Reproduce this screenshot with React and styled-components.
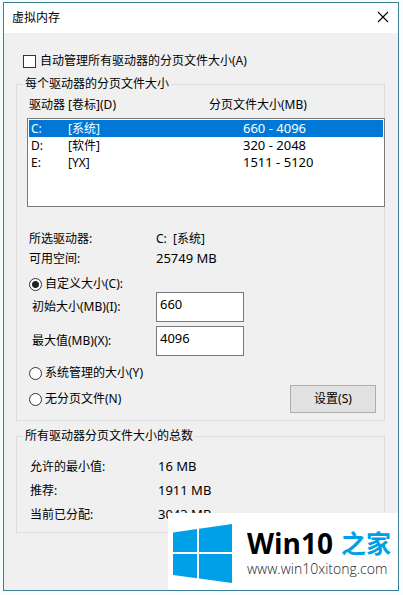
import React, { useState } from "react"
import styled, { createGlobalStyle } from "styled-components"

const colors = {
  frame: "#3f7f93",
  face: "#f0f0f0",
  groupLine: "#dcdcdc",
  field: "#7a7a7a",
  select: "#0078d7",
  brand: "#00a0e9",
}

const drives = [
  { letter: "C:", label: "[系统]", size: "660 - 4096" },
  { letter: "D:", label: "[软件]", size: "320 - 2048" },
  { letter: "E:", label: "[YX]", size: "1511 - 5120" },
]

const totals = [
  { name: "允许的最小值:", value: "16 MB" },
  { name: "推荐:", value: "1911 MB" },
  { name: "当前已分配:", value: "3043 MB" },
]

const GlobalStyle = createGlobalStyle`
  * {
    box-sizing: border-box;
  }
  body {
    margin: 0;
    background: #f6fdfe;
    color: #000;
    font: 12px/16px "Noto Sans", "Noto Sans CJK SC", sans-serif;
  }
  button,
  input {
    font: inherit;
    color: inherit;
  }
`

const Page = styled.div`
  display: flex;
  min-height: 100vh;
  padding: 2px 4px 4px 3px;
`

const Window = styled.main`
  position: relative;
  flex: 1;
  min-width: 0;
  border: 1px solid ${colors.frame};
  background: ${colors.face};
`

const TitleBar = styled.header`
  display: flex;
  align-items: center;
  justify-content: space-between;
  height: 30px;
  padding-left: 8px;
  background: #fff;
`

const Title = styled.h1`
  margin: 0;
  font-size: 12px;
  font-weight: 400;
`

const CloseButton = styled.button`
  display: flex;
  align-items: center;
  justify-content: center;
  width: 30px;
  height: 30px;
  padding: 0 0 2px;
  border: 0;
  background: none;
`

const Body = styled.div`
  padding: 20px 13px 12px 12px;
`

const Option = styled.label`
  display: flex;
  align-items: center;
  gap: ${({ $gap }) => $gap || 3}px;
  height: 16px;
`

const CheckOption = styled(Option)`
  margin: 0 0 7px 7px;
`

const Checkbox = styled.input`
  appearance: none;
  width: 13px;
  height: 13px;
  margin: 0;
  border: 1px solid #333;
  background: #fff;
  &:checked {
    background: ${colors.select};
  }
`

const Radio = styled.input`
  appearance: none;
  width: 13px;
  height: 13px;
  margin: 0;
  border: 1px solid #333;
  border-radius: 50%;
  background: #fff;
  &:checked {
    background: radial-gradient(circle, #222 3px, #fff 4px);
  }
`

const Group = styled.fieldset`
  min-width: 0;
  margin: 0 0 7px;
  padding: 0 0 ${({ $bottom }) => $bottom}px 10px;
  border: 1px solid ${colors.groupLine};
`

const Legend = styled.legend`
  margin-left: -4px;
  padding: 0 2px;
`

const Columns = styled.div`
  display: grid;
  grid-template-columns: 180px 1fr;
  padding: 5px 2px;
`

const DriveTable = styled.table`
  width: 100%;
  border-collapse: collapse;
  table-layout: fixed;
`

const DriveBox = styled.div`
  height: 89px;
  margin-right: -1px;
  padding: 1px;
  border: 1px solid ${colors.field};
  background: #fff;
`

const DriveRow = styled.tr`
  height: 17px;
  background: ${({ $selected }) => ($selected ? colors.select : "#fff")};
  color: ${({ $selected }) => ($selected ? "#fff" : "#000")};
  cursor: default;
`

const DriveCell = styled.td`
  width: ${({ $width }) => $width};
  padding: 0 0 0 2px;
  font-size: ${({ $numeric }) => ($numeric ? 13 : 12)}px;
  vertical-align: baseline;
`

const Facts = styled.dl`
  display: grid;
  grid-template-columns: ${({ $label }) => $label}px 1fr;
  grid-auto-rows: ${({ $row }) => $row}px;
  align-items: baseline;
  margin: ${({ $top }) => $top}px 0 ${({ $bottom }) => $bottom || 0}px;
  padding-left: ${({ $left }) => $left}px;
`

const Name = styled.dt``

const Value = styled.dd`
  margin: 0;
  font-size: ${({ $numeric }) => ($numeric ? 13 : 12)}px;
  white-space: pre;
`

const Custom = styled.div`
  padding: 7px 0 0 2px;
`

const Fields = styled.div`
  display: grid;
  grid-template-columns: 124px 88px;
  grid-auto-rows: 30px;
  row-gap: 4px;
  align-items: center;
  padding: 0 0 9px 5px;
`

const SizeInput = styled.input`
  width: 88px;
  height: 30px;
  padding: 0 3px 6px;
  border: 1px solid ${colors.field};
  border-radius: 0;
  background: #fff;
  font-size: 13px;
`

const Managed = styled.div`
  padding-left: 2px;
`

const Actions = styled.div`
  display: flex;
  align-items: center;
  justify-content: space-between;
  padding: 4px 8px 0 2px;
`

const SetButton = styled.button`
  width: 86px;
  height: 28px;
  padding: 0;
  border: 1px solid #adadad;
  background: #e1e1e1;
`

const Brand = styled.aside`
  position: absolute;
  right: 0;
  bottom: 0;
  display: flex;
  align-items: center;
  gap: 15px;
  width: 230px;
  height: 77px;
  padding: 3px 0 0 5px;
  background: #fff;
  font-family: "Open Sans", "Noto Sans CJK SC", sans-serif;
`

const BrandName = styled.div`
  display: flex;
  align-items: center;
  gap: 8px;
  font-size: 28px;
  font-weight: 700;
  line-height: 32px;
`

const BrandAccent = styled.span`
  color: ${colors.brand};
  font-size: 25px;
`

const BrandLink = styled.a`
  display: block;
  color: #222;
  font-size: 14px;
  font-weight: 300;
  line-height: 20px;
  text-decoration: none;
`

const WindowsLogo = () => (
  <svg width="59" height="59" viewBox="0 0 59 59" fill={colors.brand} aria-hidden="true">
    <path d="M0 8.5 24 5v23H0zM26 4.7 59 0v28H26zM0 30h24v24.3L0 51zM26 30h33v29l-33-4.5z" />
  </svg>
)

const App = () => {
  const [auto, setAuto] = useState(false)
  const [selected, setSelected] = useState("C:")
  const [mode, setMode] = useState("custom")
  const [initial, setInitial] = useState("660")
  const [maximum, setMaximum] = useState("4096")

  const radio = value => ({
    type: "radio",
    name: "mode",
    checked: mode === value,
    onChange: () => setMode(value),
  })

  return (
    <>
      <GlobalStyle />
      <Page>
        <Window>
          <TitleBar>
            <Title>虚拟内存</Title>
            <CloseButton type="button" aria-label="关闭">
              <svg width="12" height="12" viewBox="0 0 12 12" stroke="#000" strokeWidth="1.1">
                <path d="M1 1l10 10M11 1L1 11" />
              </svg>
            </CloseButton>
          </TitleBar>
          <Body>
            <CheckOption $gap={4}>
              <Checkbox type="checkbox" checked={auto} onChange={() => setAuto(!auto)} />
              自动管理所有驱动器的分页文件大小(A)
            </CheckOption>

            <Group $bottom={7}>
              <Legend>每个驱动器的分页文件大小</Legend>
              <Columns>
                <span id="drive-label">驱动器 [卷标](D)</span>
                <span>分页文件大小(MB)</span>
              </Columns>
              <DriveBox>
                <DriveTable aria-labelledby="drive-label">
                  <tbody>
                    {drives.map(({ letter, label, size }) => (
                      <DriveRow
                        key={letter}
                        $selected={letter === selected}
                        onClick={() => setSelected(letter)}
                      >
                        <DriveCell $width="37px">{letter}</DriveCell>
                        <DriveCell $width="175px">{label}</DriveCell>
                        <DriveCell $numeric>{size}</DriveCell>
                      </DriveRow>
                    ))}
                  </tbody>
                </DriveTable>
              </DriveBox>

              <Facts $label={127} $row={19} $top={24} $left={2}>
                <Name>所选驱动器:</Name>
                <Value>{"C:  [系统]"}</Value>
                <Name>可用空间:</Name>
                <Value $numeric>25749 MB</Value>
              </Facts>

              <Custom>
                <Option>
                  <Radio {...radio("custom")} />
                  自定义大小(C):
                </Option>
              </Custom>
              <Fields>
                <label htmlFor="initial">初始大小(MB)(I):</label>
                <SizeInput
                  id="initial"
                  value={initial}
                  onChange={e => setInitial(e.target.value)}
                />
                <label htmlFor="maximum">最大值(MB)(X):</label>
                <SizeInput
                  id="maximum"
                  value={maximum}
                  onChange={e => setMaximum(e.target.value)}
                />
              </Fields>
              <Managed>
                <Option>
                  <Radio {...radio("system")} />
                  系统管理的大小(Y)
                </Option>
              </Managed>
              <Actions>
                <Option>
                  <Radio {...radio("none")} />
                  无分页文件(N)
                </Option>
                <SetButton type="button">设置(S)</SetButton>
              </Actions>
            </Group>

            <Group $bottom={2}>
              <Legend>所有驱动器分页文件大小的总数</Legend>
              <Facts $label={128} $row={24} $top={14} $left={3}>
                {totals.map(({ name, value }) => (
                  <React.Fragment key={name}>
                    <Name>{name}</Name>
                    <Value $numeric>{value}</Value>
                  </React.Fragment>
                ))}
              </Facts>
            </Group>
          </Body>
          <Brand>
            <WindowsLogo />
            <div>
              <BrandName>
                Win10 <BrandAccent>之家</BrandAccent>
              </BrandName>
              <BrandLink href="http://www.win10xitong.com">www.win10xitong.com</BrandLink>
            </div>
          </Brand>
        </Window>
      </Page>
    </>
  )
}

export default App
